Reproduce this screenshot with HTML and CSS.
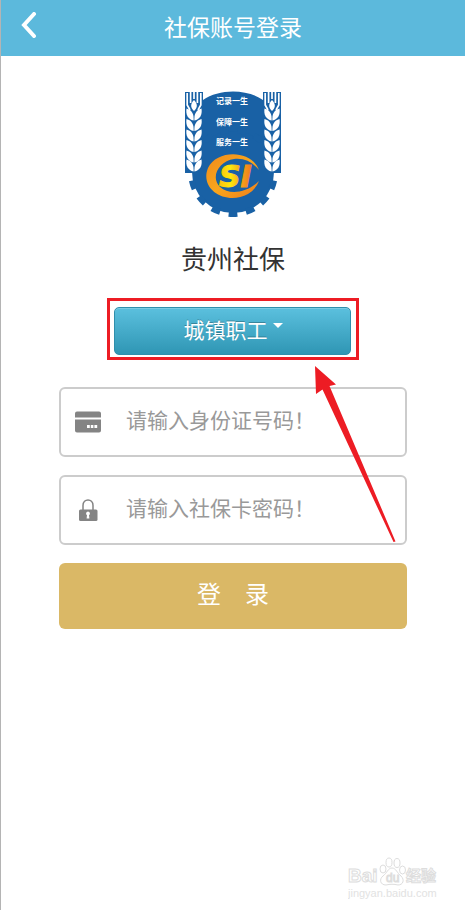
FILE: index.html
```
<!DOCTYPE html>
<html lang="zh-CN">
  <head>
    <meta charset="UTF-8">
    <meta name="viewport" content="width=device-width, initial-scale=1">
    <title>社保账号登录</title>
    <link rel="stylesheet" href="styles.css">
  </head>
  <body>
    <!-- Top bar -->
    <header class="topbar">
      <button class="back" type="button" aria-label="返回">
        <svg width="16" height="26" viewBox="0 0 16 26">
          <path d="M13 2 L3 13 L13 24" fill="none" stroke="#fff" stroke-width="4" stroke-linecap="round"/>
        </svg>
      </button>
      <h1 class="topbar-title">社保账号登录</h1>
    </header>

    <main class="content">
      <!-- Emblem -->
      <svg class="logo" width="96" height="126" viewBox="0 0 96 126">
        <defs>
          <linearGradient id="gold" x1="0" y1="0" x2="1" y2="1">
            <stop offset="0" stop-color="#f08a1c"/>
            <stop offset="0.5" stop-color="#f9a61c"/>
            <stop offset="1" stop-color="#ee7d1b"/>
          </linearGradient>
          <linearGradient id="letters" x1="0" y1="0" x2="1" y2="0">
            <stop offset="0" stop-color="#fbc010"/>
            <stop offset="0.35" stop-color="#fde80d"/>
            <stop offset="0.7" stop-color="#f6a01a"/>
            <stop offset="1" stop-color="#ee7a1b"/>
          </linearGradient>
          <g id="wheat">
            <g fill="none" stroke="#fff" stroke-width="1.7">
              <path d="M2.2 2 V14 L5 19"/>
              <path d="M5.6 1 V12"/>
              <path d="M9 0 V8"/>
              <path d="M12.4 1 V12"/>
              <path d="M15.8 2 V14 L13 19"/>
            </g>
            <path d="M9 9 C13 13 12.500 17 9 20 C5.500 17 5 13 9 9Z" fill="#fff"/>
            <g id="grain" fill="#fff">
              <path d="M1.500 17.500 C7 19 9 23 8.600 29.500 C3 28.500 0.500 23.500 1.500 17.500Z"/>
              <path d="M16.500 17.500 C11 19 9 23 9.400 29.500 C15 28.500 17.500 23.500 16.500 17.500Z"/>
            </g>
            <use href="#grain" y="10.500"/>
            <use href="#grain" y="21"/>
            <use href="#grain" y="31.500"/>
            <use href="#grain" y="42"/>
            <use href="#grain" y="51"/>
          </g>
        </defs>
        <g fill="#1961a5">
          <path d="M0 1 H18 V9 C34 -2.500 62 -2.500 78 9 V1 H96 V82 H0Z"/>
          <circle cx="48" cy="81" r="41"/>
        </g>
        <circle cx="48" cy="81" r="42" fill="none" stroke="#1961a5" stroke-width="6" pathLength="30" stroke-dasharray="1 1" stroke-dashoffset="1"/>
        <use href="#wheat"/>
        <use href="#wheat" x="78"/>
        <g class="logo-motto">
          <text x="47" y="13">记录一生</text>
          <text x="47" y="34">保障一生</text>
          <text x="47" y="54">服务一生</text>
        </g>
        <path d="M74 79 C67 59 32 58 23 77 C14 99 42 115 63 103 Q71 98 74 90 C63 101 45 105 35 96 C25 86 34 70 49 68 C60 67 67 71 74 79Z" fill="url(#gold)"/>
        <text class="logo-si" x="34" y="96">SI</text>
      </svg>
      <h2 class="app-name">贵州社保</h2>

      <!-- Insurance type -->
      <div class="highlight">
        <div class="type-box">
          <select class="type-select" aria-label="参保类型">
            <option>城镇职工</option>
            <option>城乡居民</option>
          </select>
          <span class="caret"></span>
        </div>
        <svg class="arrow" width="82" height="178" viewBox="0 0 82 178">
          <path d="M0 0 L21 18.500 L14.500 20 L80.500 175.500 L78.500 176 L7.500 23.500 L1 28Z" fill="#ed1c24"/>
        </svg>
      </div>

      <!-- Login form -->
      <form class="login-form">
        <label class="field">
          <svg class="field-icon" width="26" height="22" viewBox="0 0 26 22">
            <path d="M2 0.500 H24 Q26 0.500 26 2.500 V6.500 H0 V2.500 Q0 0.500 2 0.500Z M0 8.500 H26 V19.500 Q26 21.500 24 21.500 H2 Q0 21.500 0 19.500Z" fill="#848484"/>
            <path d="M12 14 h2.800 v3 h-2.800Z M15.800 14 h2.600 v3 h-2.600Z M19.400 14 h2.800 v3 h-2.800Z" fill="#fff"/>
          </svg>
          <input class="field-input" type="text" placeholder="请输入身份证号码！" aria-label="身份证号码">
        </label>
        <label class="field">
          <svg class="field-icon" width="26" height="22" viewBox="0 0 26 22">
            <path d="M8 11 V6.500 C8 -0.800 18 -0.800 18 6.500 V11" fill="none" stroke="#848484" stroke-width="1.500"/>
            <rect x="4" y="10.500" width="18.500" height="11.500" rx="1.500" fill="#848484"/>
            <path d="M13 12.500 a2 2 0 0 1 1 3.700 l0.400 3.300 h-2.800 l0.400 -3.300 a2 2 0 0 1 1 -3.700Z" fill="#fff"/>
          </svg>
          <input class="field-input" type="password" placeholder="请输入社保卡密码！" aria-label="社保卡密码">
        </label>
        <button class="login-btn" type="button">登　录</button>
      </form>
    </main>

    <!-- Watermark -->
    <footer class="watermark">
      <svg width="92" height="44" viewBox="0 0 92 44">
        <g class="mark">
          <text class="mark-bai" x="0" y="25">Bai</text>
          <ellipse cx="35" cy="12" rx="3" ry="4"/>
          <ellipse cx="41" cy="5.500" rx="3" ry="4.500"/>
          <ellipse cx="49" cy="6" rx="3" ry="4.500"/>
          <ellipse cx="54.500" cy="13" rx="3" ry="4"/>
          <path d="M44 11 C48 11 49 16 53 19 C57 23 55 28 50 28 C46 27 42 27 38 28 C32 28 31 22 35 19 C39 16 40 11 44 11Z"/>
          <text class="mark-du" x="38" y="25">du</text>
          <text class="mark-cn" x="58" y="24">经验</text>
        </g>
        <text class="mark-url" x="0" y="40">jingyan.baidu.com</text>
      </svg>
    </footer>
  </body>
</html>
```
FILE: styles.css
```
* {
  margin: 0;
  padding: 0;
  box-sizing: border-box;
}

body {
  display: flex;
  flex-direction: column;
  min-height: 100vh;
  background: #fff;
  border-left: 1px solid #b4b4b4;
  font-family: "Noto Sans CJK SC", sans-serif;
  color: #333;
}

button,
input,
select {
  font-family: inherit;
}

/* Top bar */
.topbar {
  display: grid;
  grid-template-columns: 56px 1fr 56px;
  align-items: center;
  height: 56px;
  background: #5cb9dc;
  color: #fff;
}

.back {
  display: flex;
  align-items: center;
  height: 50px;
  padding-left: 20px;
  background: none;
  border: 0;
  align-self: start;
}

.topbar-title {
  padding-bottom: 4px;
  font-size: 23px;
  font-weight: 400;
  line-height: 36px;
  text-align: center;
}

.content {
  display: flex;
  flex-direction: column;
  align-items: center;
  padding-top: 35px;
}

/* Emblem */
.logo-motto {
  font-size: 8px;
  font-weight: 700;
  fill: #fff;
  text-anchor: middle;
}

.logo-si {
  font-family: "DejaVu Sans", sans-serif;
  font-size: 30px;
  font-weight: 700;
  font-style: italic;
  fill: url(#letters);
  stroke: url(#letters);
  stroke-width: 1;
}

.app-name {
  margin-top: 23px;
  font-size: 26px;
  font-weight: 400;
  line-height: 36px;
}

/* Insurance type */
.highlight {
  position: relative;
  width: 54.5%;
  margin-top: 22px;
  padding: 6px 5px 2px 4px;
  border: 3px solid #ed1c24;
}

.type-box {
  position: relative;
}

.type-select {
  display: block;
  width: 100%;
  height: 48px;
  padding: 0 14px 5px 0;
  appearance: none;
  border: 1px solid #2f8fac;
  border-radius: 5px;
  background: linear-gradient(#5bc0de, #2f96b4);
  box-shadow: inset 0 1px 0 rgba(255, 255, 255, 0.2);
  color: #fff;
  font-size: 21px;
  text-align-last: center;
  text-shadow: 0 -1px 0 rgba(0, 0, 0, 0.25);
}

.caret {
  position: absolute;
  top: 16px;
  left: calc(50% + 40px);
  border: 5px solid transparent;
  border-top-color: #fff;
  border-bottom: 0;
  pointer-events: none;
}

.arrow {
  position: absolute;
  top: calc(100% + 9px);
  left: calc(50% + 82px);
  pointer-events: none;
}

/* Login form */
.login-form {
  display: flex;
  flex-direction: column;
  gap: 18px;
  width: 75%;
  margin-top: 27px;
}

.field {
  display: flex;
  align-items: center;
  gap: 25px;
  height: 70px;
  padding: 0 14px;
  border: 2px solid #ccc;
  border-radius: 6px;
}

.field-icon {
  flex-shrink: 0;
}

.field-input {
  flex: 1;
  min-width: 0;
  height: 40px;
  padding-bottom: 6px;
  border: 0;
  outline: 0;
  background: none;
  font-size: 21px;
}

.field-input::placeholder {
  color: #999;
}

.login-btn {
  height: 66px;
  padding-bottom: 8px;
  border: 0;
  border-radius: 6px;
  background: #dab866;
  color: #fff;
  font-size: 24px;
}

/* Watermark */
.watermark {
  display: flex;
  justify-content: flex-end;
  margin-top: auto;
  padding: 0 25px 9px 0;
}

.mark {
  fill: #fff;
  stroke: #ddd;
  stroke-width: 1;
}

.mark-bai {
  font-family: "Liberation Sans", sans-serif;
  font-size: 19px;
  font-weight: 700;
}

.mark-du {
  font-family: "Liberation Sans", sans-serif;
  font-size: 12px;
}

.mark-cn {
  font-size: 15px;
  font-weight: 700;
}

.mark-url {
  font-family: "Liberation Sans", sans-serif;
  font-size: 11px;
  fill: #e2e2e2;
}
```
